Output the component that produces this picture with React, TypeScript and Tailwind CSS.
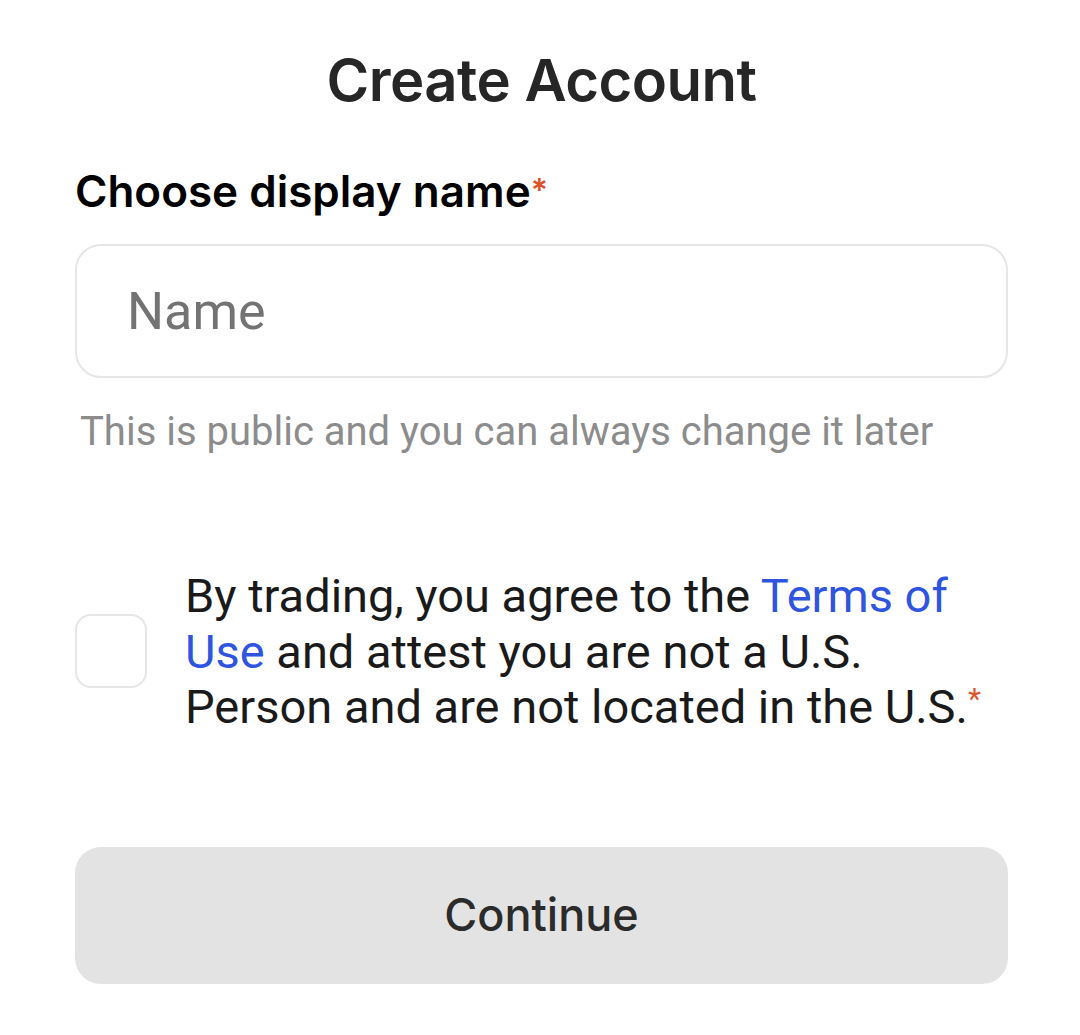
import { useState } from "react";

export default function App() {
  const [name, setName] = useState("");
  const [agreed, setAgreed] = useState(false);

  return (
    <div className="min-h-[1035px] w-[1080px] bg-white pl-[75px] pr-[72px] font-['Roboto',sans-serif]">
      <h1 className="pt-[44px] text-center font-['Inter',sans-serif] text-[58px] font-semibold leading-[72px] tracking-[-0.5px] text-[#262626]">
        Create Account
      </h1>

      <label className="mt-[47px] block font-['Inter',sans-serif] text-[44px] font-semibold leading-[56px] text-black">
        Choose display name<span className="align-top text-[32px] text-[#d9542b]">*</span>
      </label>

      <input
        value={name}
        onChange={(e) => setName(e.target.value)}
        placeholder="Name"
        className="mt-[25px] block h-[134px] w-full rounded-[26px] border-2 border-[#e6e6e6] px-[50px] text-[52px] text-[#262626] outline-none placeholder:text-[#737373]"
      />

      <p className="mt-[28px] pl-[5px] text-[40px] leading-[52px] text-[#8c8c8c]">
        This is public and you can always change it later
      </p>

      <div className="mt-[110px] flex items-center gap-[38px]">
        <button
          onClick={() => setAgreed(!agreed)}
          className={`h-[74px] w-[72px] shrink-0 rounded-[16px] border-2 ${
            agreed ? "border-[#3358d4] bg-[#3358d4]" : "border-[#e6e6e6] bg-white"
          }`}
        />
        <p className="pr-[4px] text-[47px] leading-[55.5px] text-[#1a1a1a]">
          By trading, you agree to the{" "}
          <a className="text-[#2f55e0]">Terms of Use</a> and attest you are not a U.S.
          Person and are not located in the U.S.
          <span className="align-top text-[30px] leading-[40px] text-[#d9542b]">*</span>
        </p>
      </div>

      <button className="mt-[112px] flex h-[137px] w-full items-center justify-center rounded-[26px] bg-[#e3e3e3] font-['Inter',sans-serif] text-[45px] font-medium text-[#2b2b2b]">
        Continue
      </button>
    </div>
  );
}
